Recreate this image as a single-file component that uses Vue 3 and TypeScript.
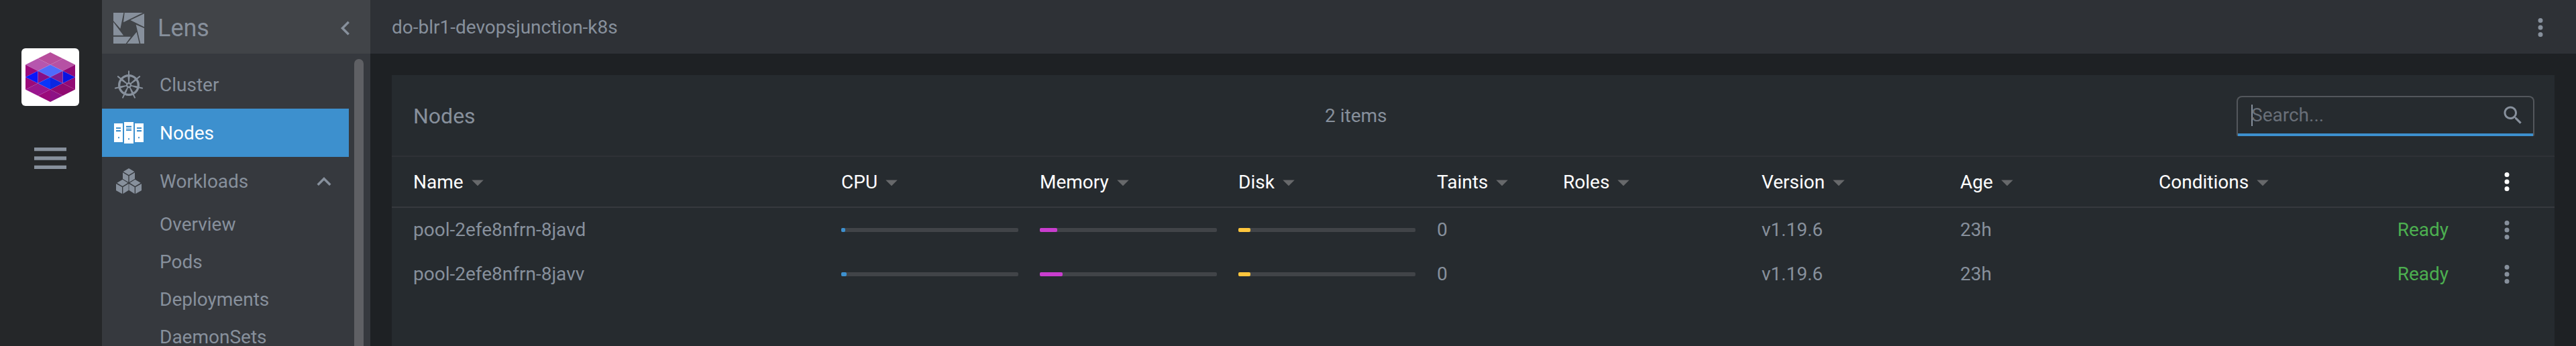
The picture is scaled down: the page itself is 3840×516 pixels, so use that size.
<script setup lang="ts">
import { ref } from 'vue'

interface Column {
  key: string
  label: string
  weight: number
}

interface NodeRow {
  name: string
  cpu: number
  memory: number
  disk: number
  taints: number
  roles: string
  version: string
  age: string
  condition: string
}

const columns: Column[] = [
  { key: 'name', label: 'Name', weight: 654 },
  { key: 'cpu', label: 'CPU', weight: 296 },
  { key: 'memory', label: 'Memory', weight: 296 },
  { key: 'disk', label: 'Disk', weight: 296 },
  { key: 'taints', label: 'Taints', weight: 188 },
  { key: 'roles', label: 'Roles', weight: 296 },
  { key: 'version', label: 'Version', weight: 296 },
  { key: 'age', label: 'Age', weight: 296 },
  { key: 'conditions', label: 'Conditions', weight: 464 },
]
const menuWeight = 142
const totalWeight = columns.reduce((sum, c) => sum + c.weight, menuWeight)
const share = (weight: number) => ({ width: `${(weight / totalWeight) * 100}%` })

const nodes: NodeRow[] = [
  { name: 'pool-2efe8nfrn-8javd', cpu: 2.3, memory: 9.8, disk: 6.8, taints: 0, roles: '', version: 'v1.19.6', age: '23h', condition: 'Ready' },
  { name: 'pool-2efe8nfrn-8javv', cpu: 3, memory: 13, disk: 6.8, taints: 0, roles: '', version: 'v1.19.6', age: '23h', condition: 'Ready' },
]

const usage = ['cpu', 'memory', 'disk'] as const
const workloads = ['Overview', 'Pods', 'Deployments', 'DaemonSets']
const spokes = [0, 1, 2, 3, 4, 5, 6].map((i) => `rotate(${(i * 360) / 7})`)
const search = ref('')
</script>

<template>
  <div class="app">
    <aside class="hotbar">
      <button class="cluster-icon" type="button" aria-label="do-blr1-devopsjunction-k8s">
        <svg viewBox="0 0 40 40" shape-rendering="geometricPrecision">
          <path fill="#b84d9c" d="M20 0 30 5 20 10 10 5z" />
          <path fill="#b656ae" d="M10 5 20 10 10 15 0 10z" />
          <path fill="#b651a4" d="M30 5 40 10 30 15 20 10z" />
          <path fill="#4f6bfc" d="M20 10 30 15 20 20 10 15z" />
          <path fill="#9b0a7b" d="M0 10 10 15 0 20zM0 20 10 25 0 30zM10 35 20 30V40z" />
          <path fill="#0a16fb" d="M0 20 10 15V25z" />
          <path fill="#860f88" d="M10 15 20 20 10 25z" />
          <path fill="#0a35fb" d="M10 25 20 20V30z" />
          <path fill="#9a168e" d="M0 30 10 25 20 30 10 35z" />
          <path fill="#920a76" d="M40 10 30 15 40 20zM40 20 30 25 40 30z" />
          <path fill="#0a14e2" d="M40 20 30 15V25z" />
          <path fill="#801a92" d="M30 15 20 20 30 25z" />
          <path fill="#0a27e2" d="M30 25 20 20V30z" />
          <path fill="#900a70" d="M40 30 30 25 20 30 30 35z" />
          <path fill="#8d1285" d="M30 35 20 30V40z" />
        </svg>
      </button>
      <button class="hotbar-menu" type="button" aria-label="Menu">
        <svg viewBox="0 0 24 24"><path d="M3 18h18v-2H3v2zm0-5h18v-2H3v2zm0-7v2h18V6H3z" /></svg>
      </button>
    </aside>

    <aside class="sidebar">
      <header class="sidebar-header">
        <svg class="logo" viewBox="0 0 138 138">
          <path d="M0 0H46L31 71 0 36zM50 0H132L45 43zM138 4V64L76 33zM101 53 138 69V138H121zM104 86 116 138H61zM78 107 56 138H0V107zM0 42 45 101H0z" />
        </svg>
        <span class="brand">Lens</span>
        <button type="button" class="plain" aria-label="Collapse sidebar">
          <svg class="icon" viewBox="0 0 24 24"><path d="M15.41 7.41 14 6l-6 6 6 6 1.41-1.41L10.83 12z" /></svg>
        </button>
      </header>
      <div class="sidebar-body">
        <nav>
          <a class="item" href="#cluster">
            <svg class="item-icon" viewBox="-72 -72 144 144">
              <circle r="43" fill="none" stroke="currentColor" stroke-width="10" />
              <g v-for="s in spokes" :key="s" :transform="s">
                <path d="M-2 -9 -5 -41H5L2 -9z" />
                <path d="M0 -44V-62" stroke="currentColor" stroke-width="6" stroke-linecap="round" />
              </g>
              <circle r="9" fill="none" stroke="currentColor" stroke-width="7" />
            </svg>
            <span>Cluster</span>
          </a>
          <a class="item active" href="#nodes" aria-current="page">
            <svg class="item-icon" viewBox="54 45 144 144">
              <path fill-rule="evenodd" d="M60 72H99V156H60zM69 90V96H90V90zM69 102V109H90V102zM78 133V139H84V133zM105 66H147V162H105zM114 83V90H138V83zM114 93V95H138V93zM114 98V105H138V98zM123 139V145H129V139zM153 72H192V156H153zM162 90V96H183V90zM162 102V109H183V102zM168 133V139H174V133z" />
            </svg>
            <span>Nodes</span>
          </a>
          <a class="item" href="#workloads" aria-expanded="true">
            <svg class="item-icon" viewBox="54 261 144 144">
              <path d="M126 273 151 288 126 303 101 288zM99 292 124 307V335L99 320zM153 292 128 307V335L153 320zM98 323 122 338 98 353 73 338zM69 342 96 357V387L69 372zM125 342 100 357V387L125 371zM154 323 179 338 154 353 130 338zM183 342 156 357V387L183 372zM127 342 152 357V387L127 371z" />
            </svg>
            <span>Workloads</span>
            <svg class="icon expand" viewBox="0 0 24 24"><path d="M7.41 15.41 12 10.83l4.59 4.58L18 14l-6-6-6 6z" /></svg>
          </a>
          <a v-for="w in workloads" :key="w" class="sub-item" :href="`#${w.toLowerCase()}`">{{ w }}</a>
        </nav>
        <div class="scrollbar"></div>
      </div>
    </aside>

    <div class="main">
      <header class="topbar">
        <span>do-blr1-devopsjunction-k8s</span>
        <button type="button" class="plain" aria-label="Cluster actions">
          <svg class="icon" viewBox="0 0 24 24"><path d="M12 8a2 2 0 1 0 0-4 2 2 0 0 0 0 4zm0 2a2 2 0 1 0 0 4 2 2 0 0 0 0-4zm0 6a2 2 0 1 0 0 4 2 2 0 0 0 0-4z" /></svg>
        </button>
      </header>

      <main class="panel">
        <div class="panel-header">
          <h1>Nodes</h1>
          <span class="count">2 items</span>
          <label class="search">
            <span class="caret"></span>
            <input v-model="search" type="text" placeholder="Search..." aria-label="Search" />
            <svg class="search-icon" viewBox="0 0 24 24"><path d="M15.5 14h-.79l-.28-.27C15.41 12.59 16 11.11 16 9.5 16 5.91 13.09 3 9.5 3S3 5.91 3 9.5 5.91 16 9.5 16c1.61 0 3.09-.59 4.23-1.57l.27.28v.79l5 4.99L20.49 19l-4.99-5zm-6 0C7.01 14 5 11.99 5 9.5S7.01 5 9.5 5 14 7.01 14 9.5 11.99 14 9.5 14z" /></svg>
          </label>
        </div>

        <table>
          <colgroup>
            <col v-for="c in columns" :key="c.key" :style="share(c.weight)" />
            <col :style="share(menuWeight)" />
          </colgroup>
          <thead>
            <tr>
              <th v-for="c in columns" :key="c.key" scope="col">
                <button type="button" class="plain sort">
                  {{ c.label }}
                  <svg class="icon arrow" viewBox="0 0 24 24"><path d="m7 10 5 5 5-5z" /></svg>
                </button>
              </th>
              <th class="menu">
                <button type="button" class="plain" aria-label="Columns">
                  <svg class="icon" viewBox="0 0 24 24"><path d="M12 8a2 2 0 1 0 0-4 2 2 0 0 0 0 4zm0 2a2 2 0 1 0 0 4 2 2 0 0 0 0-4zm0 6a2 2 0 1 0 0 4 2 2 0 0 0 0-4z" /></svg>
                </button>
              </th>
            </tr>
          </thead>
          <tbody>
            <tr v-for="n in nodes" :key="n.name">
              <td>{{ n.name }}</td>
              <td v-for="u in usage" :key="u">
                <div class="bar"><div class="fill" :class="u" :style="{ width: n[u] + '%' }"></div></div>
              </td>
              <td>{{ n.taints }}</td>
              <td>{{ n.roles }}</td>
              <td>{{ n.version }}</td>
              <td>{{ n.age }}</td>
              <td class="ready">{{ n.condition }}</td>
              <td class="menu">
                <button type="button" class="plain" :aria-label="`Actions for ${n.name}`">
                  <svg class="icon" viewBox="0 0 24 24"><path d="M12 8a2 2 0 1 0 0-4 2 2 0 0 0 0 4zm0 2a2 2 0 1 0 0 4 2 2 0 0 0 0-4zm0 6a2 2 0 1 0 0 4 2 2 0 0 0 0-4z" /></svg>
                </button>
              </td>
            </tr>
          </tbody>
        </table>
      </main>
    </div>
  </div>
</template>

<style>
body {
  margin: 0;
  background: #1e2124;
}
</style>

<style scoped>
.app,
.app * {
  box-sizing: border-box;
}
.app {
  display: flex;
  height: 100vh;
  overflow: hidden;
  background: #1e2124;
  color: #87909c;
  font: 28px/32px Roboto, "Liberation Sans", sans-serif;
}
button,
input {
  font: inherit;
  color: inherit;
}
svg {
  display: block;
  flex: none;
  fill: currentColor;
}
a {
  color: inherit;
  text-decoration: none;
}
.plain,
.hotbar-menu {
  display: flex;
  align-items: center;
  padding: 0;
  border: 0;
  background: none;
}
.icon {
  width: 42px;
  height: 42px;
}

.hotbar {
  display: flex;
  flex-direction: column;
  align-items: center;
  gap: 46px;
  flex: none;
  width: 152px;
  padding: 72px 2px 0 0;
  background: #252729;
}
.cluster-icon {
  width: 86px;
  height: 86px;
  padding: 6px;
  border: 0;
  border-radius: 6px;
  background: #fff;
}
.hotbar-menu svg {
  width: 64px;
  height: 64px;
}

.sidebar {
  display: flex;
  flex-direction: column;
  flex: none;
  width: 400px;
  background: #36393e;
}
.sidebar-header {
  display: flex;
  align-items: center;
  flex: none;
  gap: 20px;
  height: 80px;
  padding: 3px 16px 0 17px;
  background: #414448;
}
.logo {
  width: 46px;
  height: 46px;
}
.brand {
  flex: 1;
  font-size: 36px;
  line-height: 40px;
}
.sidebar-body {
  display: flex;
  flex: 1;
  min-height: 0;
  padding: 8px 10px 0 0;
}
nav {
  flex: 1;
  margin-right: 8px;
  padding-top: 2px;
  overflow: hidden;
}
.item {
  display: flex;
  align-items: center;
  gap: 22px;
  height: 72px;
  padding: 2px 16px 0;
}
.item.active {
  background: #3d90ce;
  color: #fff;
}
.item-icon {
  width: 48px;
  height: 48px;
}
.expand {
  margin-left: auto;
}
.sub-item {
  display: block;
  padding: 13px 16px 11px 86px;
}
.scrollbar {
  width: 14px;
  border-radius: 7px 7px 0 0;
  background: #5f6064;
}

.main {
  display: flex;
  flex-direction: column;
  flex: 1;
  min-width: 0;
}
.topbar {
  display: flex;
  align-items: center;
  justify-content: space-between;
  flex: none;
  height: 80px;
  padding: 2px 32px 0;
  background: #2e3136;
}
.panel {
  flex: 1;
  margin: 32px 32px 0;
  background: #262b2f;
}
.panel-header {
  display: flex;
  align-items: center;
  height: 122px;
  padding: 2px 30px 0 32px;
  border-bottom: 2px solid #2e3136;
}
h1 {
  margin: 0;
  font-size: 32px;
  line-height: 36px;
  font-weight: 400;
}
.count {
  flex: 1;
  text-align: center;
}
.search {
  display: flex;
  align-items: center;
  width: 444px;
  height: 60px;
  padding: 0 12px 4px 20px;
  border: 2px solid #53575c;
  border-bottom: 0;
  border-radius: 8px 8px 2px 2px;
  background: linear-gradient(#3d90ce, #3d90ce) bottom / 100% 4px no-repeat padding-box;
}
.caret {
  width: 2px;
  height: 32px;
  margin-right: -2px;
  background: #87909c;
}
input {
  flex: 1;
  min-width: 0;
  padding: 0;
  border: 0;
  outline: 0;
  background: none;
}
input::placeholder {
  color: #696f78;
  opacity: 1;
}
.search-icon {
  width: 36px;
  height: 36px;
}

table {
  width: 100%;
  table-layout: fixed;
  border-collapse: separate;
  border-spacing: 0;
}
th,
td {
  height: 66px;
  padding: 0 16px;
  text-align: left;
  font-weight: 400;
}
th {
  height: 76px;
  border-bottom: 2px solid #36393e;
  color: #fff;
}
th:first-child,
td:first-child {
  padding-left: 32px;
}
.sort {
  padding-top: 2px;
}
.arrow {
  color: #67696b;
}
.menu .plain {
  margin: 0 auto;
}
td.ready {
  color: #4caf50;
  text-align: right;
}
.bar {
  height: 6px;
  border-radius: 2px;
  background: #414448;
}
.fill {
  height: 100%;
  border-radius: 2px;
}
.cpu {
  background: #3d90ce;
}
.memory {
  background: #c93dce;
}
.disk {
  background: #ffc63d;
}
</style>
